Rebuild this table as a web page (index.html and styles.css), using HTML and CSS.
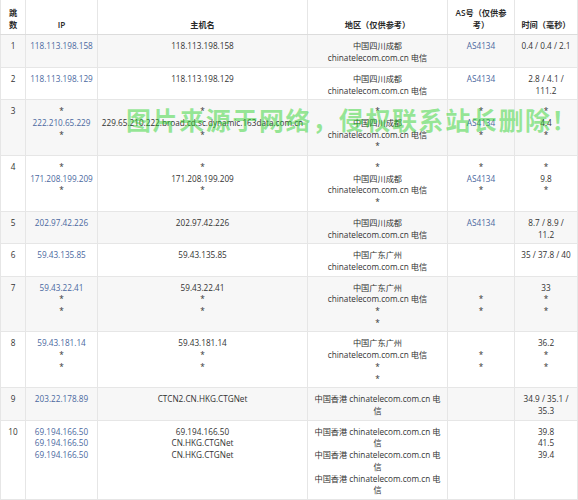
FILE: index.html
```html
<!DOCTYPE html>
<html lang="zh-CN">
<head>
<meta charset="utf-8">
<title>路由追踪</title>
<link rel="stylesheet" href="styles.css">
</head>
<body>
<div class="page">
<table class="trace">
<colgroup>
<col class="c-hop"><col class="c-ip"><col class="c-host"><col class="c-geo"><col class="c-as"><col class="c-time">
</colgroup>
<thead>
<tr><th class="hop">跳数</th><th>IP</th><th>主机名</th><th>地区（仅供参考）</th><th>AS号（仅供参考）</th><th>时间（毫秒）</th></tr>
</thead>
<tbody>
<tr>
<td class="hop">1</td>
<td><a class="lnk">118.113.198.158</a></td>
<td>118.113.198.158</td>
<td class="geo">中国四川成都 chinatelecom.com.cn 电信</td>
<td><a class="lnk">AS4134</a></td>
<td class="time">0.4 / 0.4 / 2.1</td>
</tr>
<tr>
<td class="hop">2</td>
<td><a class="lnk">118.113.198.129</a></td>
<td>118.113.198.129</td>
<td class="geo">中国四川成都 chinatelecom.com.cn 电信</td>
<td><a class="lnk">AS4134</a></td>
<td class="time">2.8 / 4.1 / 111.2</td>
</tr>
<tr>
<td class="hop">3</td>
<td><div>*</div><div><a class="lnk">222.210.65.229</a></div><div>*</div></td>
<td class="host"><div>*</div><div>229.65.210.222.broad.cd.sc.dynamic.163data.com.cn</div><div>*</div></td>
<td class="geo"><div>*</div><div>中国四川成都 chinatelecom.com.cn 电信</div><div>*</div></td>
<td><div>*</div><div><a class="lnk">AS4134</a></div><div>*</div></td>
<td class="time"><div>*</div><div>4.4</div><div>*</div></td>
</tr>
<tr>
<td class="hop">4</td>
<td><div>*</div><div><a class="lnk">171.208.199.209</a></div><div>*</div></td>
<td><div>*</div><div>171.208.199.209</div><div>*</div></td>
<td class="geo"><div>*</div><div>中国四川成都 chinatelecom.com.cn 电信</div><div>*</div></td>
<td><div>*</div><div><a class="lnk">AS4134</a></div><div>*</div></td>
<td class="time"><div>*</div><div>9.8</div><div>*</div></td>
</tr>
<tr>
<td class="hop">5</td>
<td><a class="lnk">202.97.42.226</a></td>
<td>202.97.42.226</td>
<td class="geo">中国四川成都 chinatelecom.com.cn 电信</td>
<td><a class="lnk">AS4134</a></td>
<td class="time">8.7 / 8.9 / 11.2</td>
</tr>
<tr>
<td class="hop">6</td>
<td><a class="lnk">59.43.135.85</a></td>
<td>59.43.135.85</td>
<td class="geo">中国广东广州 chinatelecom.com.cn 电信</td>
<td></td>
<td class="time">35 / 37.8 / 40</td>
</tr>
<tr>
<td class="hop">7</td>
<td><div><a class="lnk">59.43.22.41</a></div><div>*</div><div>*</div></td>
<td><div>59.43.22.41</div><div>*</div><div>*</div></td>
<td class="geo"><div>中国广东广州 chinatelecom.com.cn 电信</div><div>*</div><div>*</div></td>
<td><div>&nbsp;</div><div>*</div><div>*</div></td>
<td class="time"><div>33</div><div>*</div><div>*</div></td>
</tr>
<tr>
<td class="hop">8</td>
<td><div><a class="lnk">59.43.181.14</a></div><div>*</div><div>*</div></td>
<td><div>59.43.181.14</div><div>*</div><div>*</div></td>
<td class="geo"><div>中国广东广州 chinatelecom.com.cn 电信</div><div>*</div><div>*</div></td>
<td><div>&nbsp;</div><div>*</div><div>*</div></td>
<td class="time"><div>36.2</div><div>*</div><div>*</div></td>
</tr>
<tr>
<td class="hop">9</td>
<td><a class="lnk">203.22.178.89</a></td>
<td>CTCN2.CN.HKG.CTGNet</td>
<td class="geo">中国香港 chinatelecom.com.cn 电信</td>
<td></td>
<td class="time">34.9 / 35.1 / 35.3</td>
</tr>
<tr>
<td class="hop">10</td>
<td><div><a class="lnk">69.194.166.50</a></div><div><a class="lnk">69.194.166.50</a></div><div><a class="lnk">69.194.166.50</a></div></td>
<td><div>69.194.166.50</div><div>CN.HKG.CTGNet</div><div>CN.HKG.CTGNet</div></td>
<td class="geo"><div>中国香港 chinatelecom.com.cn 电信</div><div>中国香港 chinatelecom.com.cn 电信</div><div>中国香港 chinatelecom.com.cn 电信</div></td>
<td></td>
<td class="time"><div>39.8</div><div>41.5</div><div>39.4</div></td>
</tr>
</tbody>
</table>
<div class="watermark">图片来源于网络，侵权联系站长删除！</div>
</div>
</body>
</html>
```

FILE: styles.css
```css
html, body {
  margin: 0;
  padding: 0;
  background: #ffffff;
}

.page {
  position: relative;
  width: 578px;
}

.trace {
  width: 577px;
  table-layout: fixed;
  border-collapse: collapse;
  font-family: "Open Sans", "Noto Sans CJK SC", sans-serif;
  font-size: 8.2px;
  line-height: 11.7px;
  color: #333333;
}

.c-hop { width: 25px; }
.c-ip { width: 72px; }
.c-host { width: 210px; }
.c-geo { width: 140px; }
.c-as { width: 67px; }
.c-time { width: 63px; }

.trace th,
.trace td {
  border: 1px solid #e6e6e6;
  text-align: center;
  padding: 5px 3px 3px;
}

.trace th {
  font-weight: 600;
  color: #2a2a2a;
  vertical-align: bottom;
  padding: 7px 3px 4px;
  border-top: none;
  border-bottom: 1px solid #dcdcdc;
}

.trace th.hop {
  padding-left: 4px;
  padding-right: 4px;
}

.trace td {
  vertical-align: top;
}

.trace td.geo {
  padding-left: 4px;
  padding-right: 4px;
}

.trace td.time {
  padding-left: 5px;
  padding-right: 5px;
}

.trace td.host {
  padding-left: 1px;
  padding-right: 1px;
  white-space: nowrap;
}

.trace tbody tr:nth-child(odd) {
  background: #f7f7f7;
}

.lnk {
  color: #4a68a0;
  text-decoration: none;
}

.watermark {
  position: absolute;
  left: 126px;
  top: 103px;
  font-family: "Noto Sans CJK SC", sans-serif;
  font-size: 25px;
  line-height: 32px;
  letter-spacing: 1.6px;
  font-weight: 700;
  color: rgba(40, 210, 40, 0.48);
  white-space: nowrap;
  pointer-events: none;
}
```
